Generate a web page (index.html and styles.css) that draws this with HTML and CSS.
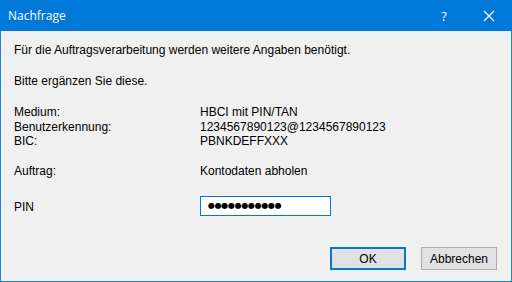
FILE: index.html
```html
<!DOCTYPE html>
<html lang="de">
<head>
<meta charset="utf-8">
<link rel="stylesheet" href="styles.css">
</head>
<body>
<div class="window">
  <div class="titlebar">
    <span class="title">Nachfrage</span>
    <span class="help">?</span>
    <span class="close">
      <svg width="12" height="12" viewBox="0 0 12 12"><path d="M1 1L11 11M11 1L1 11" stroke="#fff" stroke-width="1.1" fill="none"/></svg>
    </span>
  </div>
  <div class="content">
    <p class="intro">Für die Auftragsverarbeitung werden weitere Angaben benötigt.</p>
    <p class="intro2">Bitte ergänzen Sie diese.</p>
    <div class="grid">
      <span>Medium:</span><span>HBCI mit PIN/TAN</span>
      <span>Benutzerkennung:</span><span>1234567890123@1234567890123</span>
      <span>BIC:</span><span>PBNKDEFFXXX</span>
    </div>
    <div class="grid auftrag">
      <span>Auftrag:</span><span>Kontodaten abholen</span>
    </div>
    <div class="grid pinrow">
      <span class="pinlabel">PIN</span>
      <div class="pinbox">●●●●●●●●●●●</div>
    </div>
    <div class="buttons">
      <button class="btn default">OK</button>
      <button class="btn">Abbrechen</button>
    </div>
  </div>
</div>
</body>
</html>
```
FILE: styles.css
```css
* { box-sizing: border-box; }
html, body { margin: 0; padding: 0; }
body { width: 512px; height: 282px; overflow: hidden; font-family: "Liberation Sans", Arial, sans-serif; font-size: 12px; color: #000; }
.window { width: 512px; height: 282px; border: 1px solid #1883d7; border-top: none; background: #f0f0f0; display: flex; flex-direction: column; }
.titlebar { height: 31px; background: #0078d7; color: #fff; display: flex; align-items: center; padding-left: 8px; margin: 0 -1px; font-family: "Open Sans", "Noto Sans", sans-serif; font-size: 12px; }
.title { flex: 1; }
.help { width: 20px; text-align: center; margin-right: 12px; font-size: 13px; }
.close { width: 46px; height: 31px; display: flex; align-items: center; justify-content: center; margin-right: 0; }
.close svg { display: block; }
.content { flex: 1; padding: 12px 0 0 13px; display: flex; flex-direction: column; }
p { margin: 0; line-height: 14px; }
.intro2 { margin-top: 17px; }
.grid { display: grid; grid-template-columns: 186px auto; line-height: 14.5px; }
.grid { margin-top: 17px; }
.auftrag { margin-top: 15px; }
.pinrow { margin-top: 21px; align-items: start; }
.pinlabel { line-height: 14px; padding-top: 1px; }
.pinbox { width: 131px; height: 20px; margin-top: -3px; background: #fff; border: 1px solid #0078d7; font-family: "DejaVu Sans", sans-serif; font-size: 8px; letter-spacing: -0.3px; line-height: 18px; padding-left: 7px; }
.buttons { display: flex; justify-content: flex-end; gap: 15px; margin-top: 31px; padding-right: 14px; }
.btn { width: 76px; height: 23px; background: #e1e1e1; border: 1px solid #adadad; font-family: "Liberation Sans", Arial, sans-serif; font-size: 12px; color: #000; padding: 0; }
.btn.default { border: 2px solid #0078d7; }
```
